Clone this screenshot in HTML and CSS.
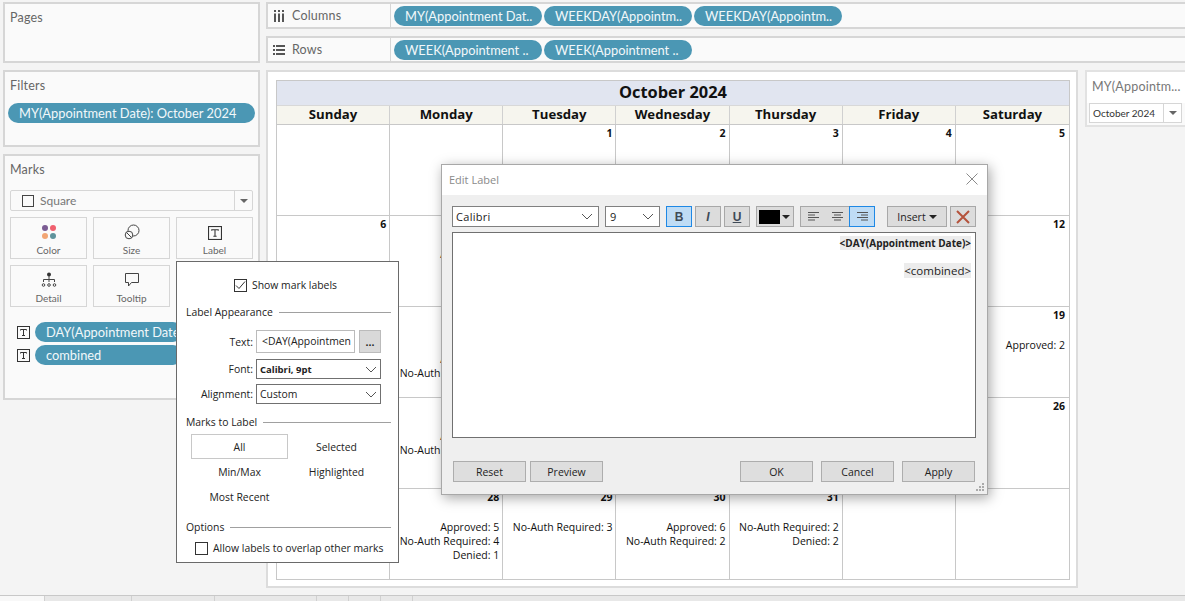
FILE: index.html
```html
<!DOCTYPE html>
<html>
<head>
    <meta charset="UTF-8">
    <meta name="viewport" content="width=device-width, initial-scale=1.0">
    <title>October 2024 calendar</title>
    <link rel="stylesheet" href="styles.css">
</head>
<body>
    <svg class="defs" width="0" height="0">
        <symbol id="chevron" viewBox="0 0 12 7"><path d="M1 1l5 5 5-5" fill="none" stroke="#555" stroke-width="1"/></symbol>
        <symbol id="t-box" viewBox="0 0 13 13"><rect x=".5" y=".5" width="12" height="12" fill="none" stroke="#333"/><path d="M3.5 4.5v-1h6v1M6.5 3.5v6M5 9.5h3" fill="none" stroke="#333"/></symbol>
    </svg>

    <div class="workspace">
        <div class="sidebar">
            <div class="card pages-card">
                <div class="card-title">Pages</div>
            </div>
            <div class="card filters-card">
                <div class="card-title">Filters</div>
                <div class="pill filter-pill">MY(Appointment Date): October 2024</div>
            </div>
            <div class="card marks-card">
                <div class="card-title">Marks</div>
                <div class="mark-type">
                    <span class="mark-square"></span>
                    <span class="mark-name">Square</span>
                    <span class="mark-arrow"><span class="tri"></span></span>
                </div>
                <div class="mark-buttons">
                    <div class="mark-btn">
                        <svg width="16" height="16" viewBox="0 0 16 16"><circle cx="4" cy="4" r="3" fill="#7b5c93"/><circle cx="12" cy="4" r="3" fill="#f0606e"/><circle cx="4" cy="12" r="3" fill="#f2a574"/><circle cx="12" cy="12" r="3" fill="#5f939c"/></svg>
                        <span>Color</span>
                    </div>
                    <div class="mark-btn">
                        <svg width="16" height="16" viewBox="0 0 16 16" fill="none" stroke="#444"><circle cx="9.5" cy="6.5" r="5.5"/><circle cx="5" cy="11" r="3.8" fill="#fafafa"/><path d="M2.5 8.5l5 5"/></svg>
                        <span>Size</span>
                    </div>
                    <div class="mark-btn">
                        <svg width="14" height="14" viewBox="0 0 13 13"><use href="#t-box"/></svg>
                        <span>Label</span>
                    </div>
                    <div class="mark-btn">
                        <svg width="16" height="16" viewBox="0 0 16 16" fill="none" stroke="#444"><circle cx="8" cy="2.5" r="2" fill="#333" stroke="none"/><path d="M8 4v6M2.5 10V7.5h11V10"/><circle cx="2.5" cy="13" r="1.3"/><circle cx="8" cy="13" r="1.3"/><circle cx="13.5" cy="13" r="1.3"/></svg>
                        <span>Detail</span>
                    </div>
                    <div class="mark-btn">
                        <svg width="16" height="16" viewBox="0 0 16 16" fill="none" stroke="#444"><path d="M1.5 1.5h13v9h-7l-3 3.5v-3.5h-3z"/></svg>
                        <span>Tooltip</span>
                    </div>
                </div>
                <div class="mark-fields">
                    <div class="mark-field">
                        <svg width="13" height="13"><use href="#t-box"/></svg>
                        <div class="pill">DAY(Appointment Date)</div>
                    </div>
                    <div class="mark-field">
                        <svg width="13" height="13"><use href="#t-box"/></svg>
                        <div class="pill">combined</div>
                    </div>
                </div>
            </div>
        </div>

        <div class="main">
            <div class="shelf">
                <div class="shelf-label">
                    <svg width="12" height="12" viewBox="0 0 12 12" fill="#555"><rect x="1" y="3.500" width="2" height="8.500"/><rect x="5" y="3.500" width="2" height="8.500"/><rect x="9" y="3.500" width="2" height="8.500"/><rect x="1" y="0" width="2" height="2"/><rect x="5" y="0" width="2" height="2"/><rect x="9" y="0" width="2" height="2"/></svg>
                    <span>Columns</span>
                </div>
                <div class="pill shelf-pill">MY(Appointment Dat..</div>
                <div class="pill shelf-pill">WEEKDAY(Appointm..</div>
                <div class="pill shelf-pill">WEEKDAY(Appointm..</div>
            </div>
            <div class="shelf">
                <div class="shelf-label">
                    <svg width="12" height="10" viewBox="0 0 12 10" fill="#555"><rect x="0" y="0" width="2" height="2"/><rect x="3" y="0" width="9" height="2"/><rect x="0" y="4" width="2" height="2"/><rect x="3" y="4" width="9" height="2"/><rect x="0" y="8" width="2" height="2"/><rect x="3" y="8" width="9" height="2"/></svg>
                    <span>Rows</span>
                </div>
                <div class="pill shelf-pill">WEEK(Appointment ..</div>
                <div class="pill shelf-pill">WEEK(Appointment ..</div>
            </div>

            <div class="view-row">
                <div class="canvas">
                    <div class="calendar">
                        <div class="cal-title">October 2024</div>
                        <div class="cal-head">
                            <div>Sunday</div>
                            <div>Monday</div>
                            <div>Tuesday</div>
                            <div>Wednesday</div>
                            <div>Thursday</div>
                            <div>Friday</div>
                            <div>Saturday</div>
                        </div>
                        <div class="cal-grid">
                            <div class="cell"></div>
                            <div class="cell"></div>
                            <div class="cell"><b>1</b></div>
                            <div class="cell"><b>2</b></div>
                            <div class="cell"><b>3</b></div>
                            <div class="cell"><b>4</b></div>
                            <div class="cell"><b>5</b></div>

                            <div class="cell"><b>6</b></div>
                            <div class="cell"><b>7</b><p>Approved: 1</p></div>
                            <div class="cell"><b>8</b></div>
                            <div class="cell"><b>9</b></div>
                            <div class="cell"><b>10</b></div>
                            <div class="cell"><b>11</b></div>
                            <div class="cell"><b>12</b></div>

                            <div class="cell"><b>13</b></div>
                            <div class="cell"><b>14</b><p>&nbsp;</p><p>Approved: 1</p><p>No-Auth Required: 1</p></div>
                            <div class="cell"><b>15</b></div>
                            <div class="cell"><b>16</b></div>
                            <div class="cell"><b>17</b></div>
                            <div class="cell"><b>18</b></div>
                            <div class="cell"><b>19</b><p>Approved: 2</p></div>

                            <div class="cell"><b>20</b></div>
                            <div class="cell"><b>21</b><p>Approved: 1</p><p>No-Auth Required: 1</p></div>
                            <div class="cell"><b>22</b></div>
                            <div class="cell"><b>23</b></div>
                            <div class="cell"><b>24</b></div>
                            <div class="cell"><b>25</b></div>
                            <div class="cell"><b>26</b></div>

                            <div class="cell"><b>27</b></div>
                            <div class="cell"><b>28</b><p>Approved: 5</p><p>No-Auth Required: 4</p><p>Denied: 1</p></div>
                            <div class="cell"><b>29</b><p>No-Auth Required: 3</p></div>
                            <div class="cell"><b>30</b><p>Approved: 6</p><p>No-Auth Required: 2</p></div>
                            <div class="cell"><b>31</b><p>No-Auth Required: 2</p><p>Denied: 2</p></div>
                            <div class="cell"></div>
                            <div class="cell"></div>
                        </div>
                    </div>
                </div>
                <div class="card quick-filter">
                    <div class="qf-title">MY(Appointm...</div>
                    <div class="qf-select">
                        <span class="qf-value">October 2024</span>
                        <span class="qf-arrow"><span class="tri"></span></span>
                    </div>
                </div>
            </div>
        </div>
    </div>

    <div class="tabs">
        <div class="tab tab-active"></div>
        <div class="tab tab-a"></div>
        <div class="tab tab-b"></div>
        <div class="tab tab-c"></div>
        <div class="tab tab-d"></div>
        <div class="tab tab-d"></div>
        <div class="tab tab-d"></div>
    </div>

    <!-- label popup, sits over the marks card -->
    <div class="label-popup">
        <label class="show-labels"><span class="check"><svg width="11" height="9" viewBox="0 0 11 9"><path d="M1 4.500l3 3 6-7" fill="none" stroke="#333"/></svg></span>Show mark labels</label>

        <div class="legend">Label Appearance</div>
        <div class="form-row form-text">
            <span class="form-label">Text:</span>
            <span class="text-input">&lt;DAY(Appointmen</span>
            <span class="dots">...</span>
        </div>
        <div class="form-row form-font">
            <span class="form-label">Font:</span>
            <span class="combo combo-bold">Calibri, 9pt<svg width="12" height="7"><use href="#chevron"/></svg></span>
        </div>
        <div class="form-row">
            <span class="form-label">Alignment:</span>
            <span class="combo">Custom<svg width="12" height="7"><use href="#chevron"/></svg></span>
        </div>

        <div class="legend legend-marks">Marks to Label</div>
        <div class="label-options">
            <div class="option option-on">All</div>
            <div class="option">Selected</div>
            <div class="option">Min/Max</div>
            <div class="option">Highlighted</div>
            <div class="option">Most Recent</div>
        </div>

        <div class="legend legend-options">Options</div>
        <label class="overlap"><span class="check"></span>Allow labels to overlap other marks</label>
    </div>

    <!-- edit label dialog -->
    <div class="dialog">
        <div class="dialog-title">
            <span>Edit Label</span>
            <svg width="12" height="12" viewBox="0 0 12 12"><path d="M.5.5l11 11M11.500.5l-11 11" stroke="#8a8a8a" fill="none"/></svg>
        </div>
        <div class="dialog-body">
            <div class="toolbar">
                <span class="combo tb-font">Calibri<svg width="12" height="7"><use href="#chevron"/></svg></span>
                <span class="combo tb-size">9<svg width="12" height="7"><use href="#chevron"/></svg></span>
                <span class="tb-btn tb-on tb-b">B</span>
                <span class="tb-btn tb-i">I</span>
                <span class="tb-btn tb-u">U</span>
                <span class="tb-color"><span class="swatch"></span><span class="tri tri-dark"></span></span>
                <span class="tb-align">
                    <span class="align-btn">
                        <svg width="11" height="9" viewBox="0 0 11 9" stroke="#555"><path d="M0 .5h11M0 3h7M0 5.500h11M0 8h7"/></svg>
                    </span>
                    <span class="align-btn">
                        <svg width="11" height="9" viewBox="0 0 11 9" stroke="#555"><path d="M0 .5h11M2 3h7M0 5.500h11M2 8h7"/></svg>
                    </span>
                    <span class="align-btn align-on">
                        <svg width="11" height="9" viewBox="0 0 11 9" stroke="#555"><path d="M0 .5h11M4 3h7M0 5.500h11M4 8h7"/></svg>
                    </span>
                </span>
                <span class="tb-insert">Insert<span class="tri tri-dark"></span></span>
                <span class="tb-clear">
                    <svg width="14" height="14" viewBox="0 0 14 14"><path d="M1 1l12 12M13 1L1 13" stroke="#b5533c" stroke-width="2" fill="none"/></svg>
                </span>
            </div>
            <div class="editor">
                <div><span class="token token-bold">&lt;DAY(Appointment Date)&gt;</span></div>
                <div class="token-line"><span class="token token-plain">&lt;combined&gt;</span></div>
            </div>
            <div class="dialog-foot">
                <span class="btn">Reset</span>
                <span class="btn">Preview</span>
                <span class="foot-gap"></span>
                <span class="btn">OK</span>
                <span class="btn">Cancel</span>
                <span class="btn">Apply</span>
            </div>
            <svg class="grip" width="9" height="9" viewBox="0 0 9 9" fill="#aaa"><rect x="6" y="0" width="2" height="2"/><rect x="3" y="3" width="2" height="2"/><rect x="6" y="3" width="2" height="2"/><rect x="0" y="6" width="2" height="2"/><rect x="3" y="6" width="2" height="2"/><rect x="6" y="6" width="2" height="2"/></svg>
        </div>
    </div>
</body>
</html>
```

FILE: styles.css
```css
* {
    box-sizing: border-box;
}

html, body {
    margin: 0;
    padding: 0;
    height: 601px;
    overflow: hidden;
}

body {
    position: relative;
    display: flex;
    flex-direction: column;
    background-color: #f4f4f4;
    font-family: "Open Sans", sans-serif;
    color: #222;
}

.defs {
    position: absolute;
}

.workspace {
    display: flex;
    flex: 1;
    min-height: 0;
    padding: 2px 0 0 3px;
}

/* left column */
.sidebar {
    display: flex;
    flex-direction: column;
    gap: 7px;
    width: 257px;
    flex-shrink: 0;
}

.card {
    background-color: #fafafa;
    border: 2px solid #d6d6d6;
}

.card-title {
    padding: 5px 0 0 5px;
    font-size: 12.500px;
    line-height: 18px;
    color: #666;
    font-family: Lato, sans-serif;
    letter-spacing: .2px;
}

.pages-card {
    height: 61px;
}

.filters-card {
    height: 77px;
}

.marks-card {
    height: 246px;
}

.pill {
    display: flex;
    align-items: center;
    height: 20px;
    border-radius: 10px;
    background-color: #4b97b4;
    color: #f2f8fa;
    font-family: Lato, sans-serif;
    font-size: 12.850px;
    white-space: nowrap;
    overflow: hidden;
    padding-left: 11px;
}

.filter-pill {
    margin: 8px 3px 0 3px;
}

.mark-type {
    display: flex;
    align-items: center;
    height: 21px;
    margin: 11px 5px 0 5px;
    border: 1px solid #d6d6d6;
    border-radius: 2px;
    background-color: #fafafa;
    font-family: Lato, sans-serif;
    font-size: 12px;
    color: #777;
}

.mark-square {
    width: 12px;
    height: 12px;
    margin-left: 11px;
    border: 1px solid #444;
}

.mark-name {
    flex: 1;
    margin-left: 6px;
}

.mark-arrow {
    display: flex;
    align-items: center;
    justify-content: center;
    width: 18px;
    height: 100%;
    border-left: 1px solid #d6d6d6;
}

.tri {
    display: inline-block;
    width: 0;
    height: 0;
    border-left: 4px solid transparent;
    border-right: 4px solid transparent;
    border-top: 4px solid #666;
}

.tri-dark {
    border-top-color: #222;
}

.mark-buttons {
    display: grid;
    grid-template-columns: repeat(3, 77px);
    grid-auto-rows: 42px;
    gap: 6px;
    margin: 6px 0 0 5px;
}

.mark-btn {
    display: flex;
    flex-direction: column;
    align-items: center;
    justify-content: flex-end;
    gap: 4px;
    padding-bottom: 2px;
    border: 1px solid #d6d6d6;
    font-family: Lato, sans-serif;
    font-size: 10px;
    color: #666;
}

.mark-fields {
    margin: 15px 0 0 12px;
}

.mark-field {
    display: flex;
    align-items: center;
    gap: 5px;
    margin-bottom: 3px;
}

.mark-field .pill {
    width: 148px;
}

/* shelves and view */
.main {
    display: flex;
    flex-direction: column;
    flex: 1;
    min-width: 0;
    margin-left: 6px;
}

.shelf {
    display: flex;
    align-items: center;
    gap: 2px;
    height: 27px;
    margin-bottom: 7px;
    background-color: #fafafa;
    border: 2px solid #d6d6d6;
    border-width: 2px 0 2px 2px;
}

.shelf-label {
    display: flex;
    align-items: center;
    gap: 7px;
    width: 123px;
    height: 100%;
    margin-right: 1px;
    padding-left: 5px;
    border-right: 1px solid #d6d6d6;
    font-family: Lato, sans-serif;
    font-size: 12.500px;
    letter-spacing: .2px;
    color: #666;
}

.shelf-pill {
    width: 148px;
}

.view-row {
    display: flex;
    gap: 7px;
    align-items: flex-start;
}

.canvas {
    width: 812px;
    height: 518px;
    padding: 8px 7px 8px 8px;
    background-color: #fff;
    border: 2px solid #dcdcdc;
}

.calendar {
    width: 794px;
    font-family: "Open Sans", sans-serif;
    color: #111;
    border: 1px solid #c8c8c8;
    border-width: 1px 1px 0 1px;
}

.cal-title {
    height: 24px;
    background-color: #e1e5f0;
    text-align: center;
    font-size: 16.400px;
    font-weight: 700;
    line-height: 22px;
}

.cal-head {
    display: grid;
    grid-template-columns: repeat(7, 1fr);
    height: 20px;
    background-color: #f6f5ee;
    border-top: 1px solid #d8d8d8;
    border-bottom: 1px solid #c8c8c8;
}

.cal-head div {
    text-align: center;
    font-size: 13.200px;
    font-weight: 700;
    line-height: 16px;
    border-right: 1px solid #d0d0d0;
}

.cal-head div:last-child {
    border-right: none;
}

.cal-grid {
    display: grid;
    grid-template-columns: repeat(7, 1fr);
    grid-auto-rows: 91px;
}

.cell {
    padding: 1px 3px 0 0;
    border-right: 1px solid #c8c8c8;
    border-bottom: 1px solid #c8c8c8;
    text-align: right;
    font-size: 10.500px;
    line-height: 14px;
    white-space: nowrap;
}

.cell:nth-child(7n) {
    border-right: none;
    padding-right: 4px;
}

.cell b {
    display: block;
    margin-bottom: 16px;
}

.cell p {
    margin: 0;
}

.quick-filter {
    width: 100px;
    height: 57px;
    border-right: none;
    border-color: #e2e2e2;
}

.qf-title {
    height: 31px;
    padding: 7px 0 0 5px;
    font-family: Lato, sans-serif;
    font-size: 12.500px;
    letter-spacing: .2px;
    color: #777;
    background-color: #fff;
}

.qf-select {
    display: flex;
    align-items: center;
    height: 20px;
    margin-left: 2px;
    width: 93px;
    background-color: #fff;
    border: 1px solid #d6d6d6;
    font-size: 10px;
    font-family: Lato, sans-serif;
    color: #333;
}

.qf-value {
    flex: 1;
    padding-left: 3px;
}

.qf-arrow {
    display: flex;
    align-items: center;
    justify-content: center;
    width: 18px;
    height: 100%;
    border-left: 1px solid #d6d6d6;
}

/* bottom tab strip */
.tabs {
    display: flex;
    height: 6px;
    background-color: #e8e8e8;
    border-top: 1px solid #c8c8c8;
}

.tab {
    height: 100%;
    border-right: 1px solid #d0d0d0;
}

.tab-active {
    width: 45px;
    background-color: #f8f8f8;
}

.tab-a {
    width: 87px;
}

.tab-b {
    width: 83px;
}

.tab-c {
    width: 102px;
}

.tab-d {
    width: 32px;
}

/* popup */
.label-popup {
    position: absolute;
    left: 176px;
    top: 261px;
    width: 223px;
    height: 302px;
    padding: 0 7px 0 9px;
    background-color: #fff;
    border: 1px solid #6a6a6a;
    font-family: "Open Sans", sans-serif;
    font-size: 10.400px;
    color: #222;
}

.check {
    display: inline-flex;
    align-items: center;
    justify-content: center;
    width: 13px;
    height: 13px;
    border: 1px solid #333;
    flex-shrink: 0;
}

.show-labels {
    display: flex;
    align-items: center;
    gap: 5px;
    height: 14px;
    margin: 16px 0 0 48px;
}

.legend {
    display: flex;
    align-items: center;
    gap: 6px;
    height: 14px;
    margin-top: 13px;
}

.legend::after {
    content: "";
    flex: 1;
    height: 1px;
    background-color: #a0a0a0;
}

.form-row {
    display: flex;
    align-items: center;
    height: 20px;
    margin-top: 5px;
}

.form-text {
    height: 23px;
    margin-top: 11px;
}

.form-font {
    margin-top: 6px;
}

.form-label {
    width: 67px;
    margin-right: 3px;
    text-align: right;
}

.text-input {
    width: 99px;
    height: 23px;
    padding: 0 3px 0 5px;
    border: 1px solid #bbb;
    line-height: 21px;
    overflow: hidden;
    white-space: nowrap;
}

.dots {
    width: 22px;
    height: 23px;
    margin-left: 4px;
    background-color: #d9d9d9;
    border: 1px solid #bbb;
    text-align: center;
    line-height: 22px;
    font-weight: 700;
}

.combo {
    display: flex;
    align-items: center;
    justify-content: space-between;
    height: 20px;
    width: 125px;
    padding: 0 3px 0 3px;
    background-color: #fff;
    border: 1px solid #707070;
}

.combo svg {
    flex-shrink: 0;
}

.combo-bold {
    font-weight: 700;
    font-size: 9.500px;
}

.legend-marks {
    margin-top: 11px;
}

.label-options {
    display: grid;
    grid-template-columns: 97px 97px;
    grid-auto-rows: 25px;
    column-gap: 0;
    margin: 5px 0 0 5px;
}

.option {
    display: flex;
    align-items: center;
    justify-content: center;
}

.option-on {
    border: 1px solid #c8c8c8;
}

.legend-options {
    margin-top: 11px;
}

.overlap {
    display: flex;
    align-items: center;
    gap: 5px;
    margin: 7px 0 0 9px;
    white-space: nowrap;
}

/* dialog */
.dialog {
    position: absolute;
    left: 441px;
    top: 164px;
    width: 547px;
    height: 331px;
    display: flex;
    flex-direction: column;
    border: 1px solid #a8a8a8;
    box-shadow: 2px 3px 12px rgba(0, 0, 0, 0.35);
    font-family: "Open Sans", sans-serif;
    font-size: 10.500px;
    color: #222;
}

.dialog-title {
    display: flex;
    align-items: center;
    justify-content: space-between;
    height: 30px;
    padding: 0 9px 2px 7px;
    background-color: #fff;
    color: #8a8a8a;
    font-size: 11px;
}

.dialog-body {
    position: relative;
    flex: 1;
    padding: 11px 11px 0 10px;
    background-color: #efefef;
}

.toolbar {
    display: flex;
    align-items: center;
    height: 21px;
}

.toolbar .combo {
    height: 21px;
    padding: 0 5px 0 3px;
    border-color: #808080;
    font-size: 11px;
    letter-spacing: .3px;
}

.tb-font {
    width: 147px;
    flex-shrink: 0;
}

.toolbar .tb-size {
    width: 55px;
    margin-left: 6px;
    padding-left: 4px;
}

.tb-btn {
    display: flex;
    align-items: center;
    justify-content: center;
    width: 26px;
    height: 21px;
    margin-left: 3px;
    background-color: #dcdcdc;
    border: 1px solid #a8a8a8;
    font-family: "Liberation Sans", sans-serif;
    font-size: 12px;
    color: #3f4a56;
}

.tb-on {
    margin-left: 6px;
    background-color: #bfdcf5;
    border-color: #1e88e5;
}

.tb-b {
    font-weight: 700;
}

.tb-i {
    font-weight: 700;
    font-style: italic;
}

.tb-u {
    font-weight: 700;
    text-decoration: underline;
}

.tb-color {
    display: flex;
    align-items: center;
    gap: 2px;
    width: 38px;
    height: 21px;
    margin-left: 6px;
    padding-left: 2px;
    background-color: #dcdcdc;
    border: 1px solid #a8a8a8;
}

.swatch {
    width: 21px;
    height: 14px;
    background-color: #000;
}

.tb-align {
    display: flex;
    width: 75px;
    height: 21px;
    margin-left: 6px;
    background-color: #dcdcdc;
    border: 1px solid #a8a8a8;
}

.align-btn {
    display: flex;
    align-items: center;
    justify-content: center;
    flex: 1;
    margin: -1px 0;
}

.align-on {
    margin-right: -1px;
    background-color: #bfdcf5;
    border: 1px solid #1e88e5;
}

.tb-insert {
    display: flex;
    align-items: center;
    justify-content: center;
    gap: 3px;
    width: 60px;
    height: 21px;
    margin-left: 12px;
    background-color: #dcdcdc;
    border: 1px solid #a8a8a8;
}

.tb-clear {
    display: flex;
    align-items: center;
    justify-content: center;
    width: 26px;
    height: 21px;
    margin-left: 3px;
    background-color: #dcdcdc;
    border: 1px solid #a8a8a8;
}

.editor {
    height: 206px;
    margin-top: 5px;
    padding: 3px 4px 0 0;
    background-color: #fff;
    border: 1px solid #707070;
    text-align: right;
    line-height: 14px;
}

.token-line {
    margin-top: 14px;
}

.token {
    background-color: #ececec;
}

.token-bold {
    font-weight: 700;
    font-size: 10px;
}

.token-plain {
    font-size: 11.500px;
}

.dialog-foot {
    display: flex;
    gap: 4px;
    margin: 23px 0 0 1px;
}

.foot-gap {
    width: 129px;
    flex-shrink: 0;
}

.btn {
    display: flex;
    align-items: center;
    justify-content: center;
    flex-shrink: 0;
    width: 73px;
    height: 21px;
    background-color: #dedede;
    border: 1px solid #adadad;
}

.btn:nth-last-child(-n+2) {
    margin-left: 4px;
}

.grip {
    position: absolute;
    right: 2px;
    bottom: 2px;
}
```
